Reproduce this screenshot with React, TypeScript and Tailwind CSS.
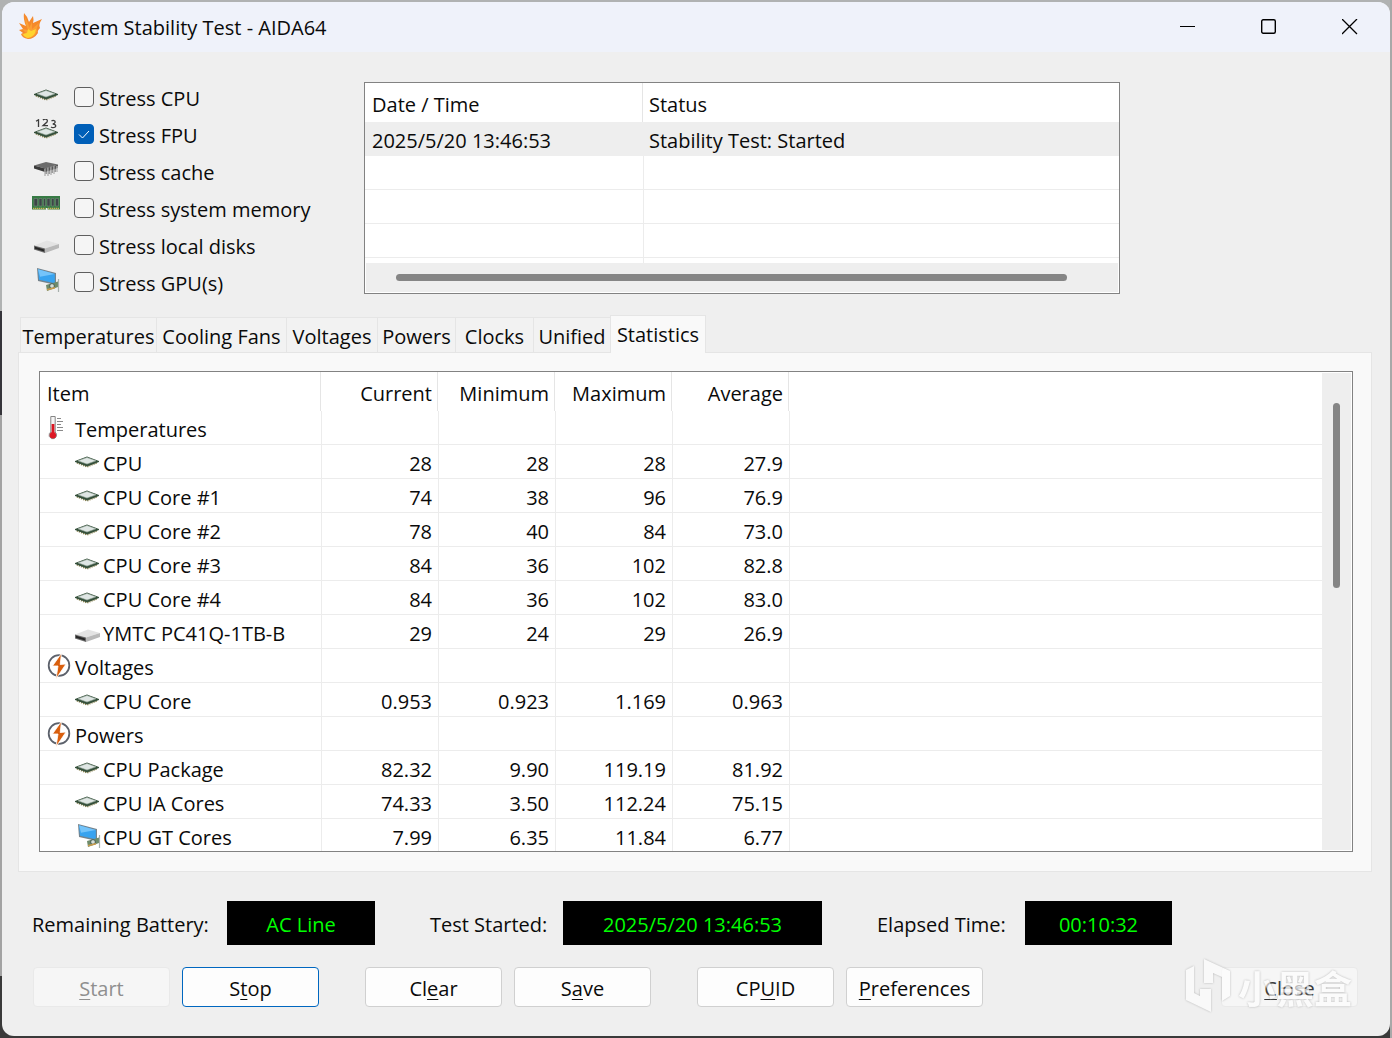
import { clsx } from "clsx";
import { useState } from "react";
import type { ReactNode } from "react";

type IconName = "cpu" | "fpu" | "cache" | "memory" | "disk" | "gpu" | "thermometer" | "bolt";

interface StressOption {
  id: string;
  label: string;
  icon: IconName;
}

interface StatRow {
  label: string;
  icon: IconName;
  group?: boolean;
  values?: string[];
}

const STRESS_OPTIONS: StressOption[] = [
  { id: "cpu", label: "Stress CPU", icon: "cpu" },
  { id: "fpu", label: "Stress FPU", icon: "fpu" },
  { id: "cache", label: "Stress cache", icon: "cache" },
  { id: "memory", label: "Stress system memory", icon: "memory" },
  { id: "disk", label: "Stress local disks", icon: "disk" },
  { id: "gpu", label: "Stress GPU(s)", icon: "gpu" },
];

const TABS = [
  { label: "Temperatures", width: "w-[136px]" },
  { label: "Cooling Fans", width: "w-[130px]" },
  { label: "Voltages", width: "w-[91px]" },
  { label: "Powers", width: "w-[78px]" },
  { label: "Clocks", width: "w-[78px]" },
  { label: "Unified", width: "w-[77px]" },
  { label: "Statistics", width: "w-[96px]" },
];

const COLUMNS = ["Current", "Minimum", "Maximum", "Average"];

const ROWS: StatRow[] = [
  { label: "Temperatures", icon: "thermometer", group: true },
  { label: "CPU", icon: "cpu", values: ["28", "28", "28", "27.9"] },
  { label: "CPU Core #1", icon: "cpu", values: ["74", "38", "96", "76.9"] },
  { label: "CPU Core #2", icon: "cpu", values: ["78", "40", "84", "73.0"] },
  { label: "CPU Core #3", icon: "cpu", values: ["84", "36", "102", "82.8"] },
  { label: "CPU Core #4", icon: "cpu", values: ["84", "36", "102", "83.0"] },
  { label: "YMTC PC41Q-1TB-B", icon: "disk", values: ["29", "24", "29", "26.9"] },
  { label: "Voltages", icon: "bolt", group: true },
  { label: "CPU Core", icon: "cpu", values: ["0.953", "0.923", "1.169", "0.963"] },
  { label: "Powers", icon: "bolt", group: true },
  { label: "CPU Package", icon: "cpu", values: ["82.32", "9.90", "119.19", "81.92"] },
  { label: "CPU IA Cores", icon: "cpu", values: ["74.33", "3.50", "112.24", "75.15"] },
  { label: "CPU GT Cores", icon: "gpu", values: ["7.99", "6.35", "11.84", "6.77"] },
];

function Chip({ y = 0 }: { y?: number }) {
  return (
    <g transform={`translate(0 ${y})`}>
      <path d="M4 13.5 14 17.5 24 13.5" fill="none" stroke="#8d8450" strokeWidth="2.2" strokeDasharray="1.2 1" />
      <path d="M2 12 14 7.5 26 12V13L14 17.5 2 13z" fill="#35503b" />
      <path d="M5 11.8 14 8.5 23 11.8 14 15z" fill="#dfe6e4" stroke="#9aaba0" strokeWidth="0.6" />
    </g>
  );
}

/** 28px device icons, shared by the option list and the statistics tree. */
function Icon({ name }: { name: IconName }) {
  return (
    <svg className="size-7 shrink-0" viewBox="0 0 28 28" aria-hidden="true">
      {name === "cpu" && <Chip />}
      {name === "fpu" && (
        <>
          <g fill="none" stroke="#3c3c3c" strokeWidth="1.3">
            <path d="M4 2.2 6.5 .8V8" />
            <path d="M11 1.2Q12 -.2 14 .2 16 1 15 3L11 6.7H16" />
            <path d="M19.5 2Q21 .8 22.8 2 24 4 20.8 5 24.5 5.5 23.5 7.7 21 9.5 19 8" />
          </g>
          <Chip y={1} />
        </>
      )}
      {name === "cache" && (
        <>
          <path d="M2 9.5 14 6 26 8.5 13 12.5z" fill="#6c6c6c" />
          <path d="M2 9.5 13 12.5V16L2 12.5z" fill="#3a3a3a" />
          <path d="M13 12.5 26 8.5V12L13 16z" fill="#575757" />
          <path d="M13 13V20M16 12V20M19 11V19M22 10V18M25 10V16" stroke="#b4b4b4" strokeWidth="1.4" />
          <path d="M14.2 13V18M17.2 12V18M20.2 11V17M23.2 10V16" stroke="#555" strokeWidth="0.8" />
        </>
      )}
      {name === "memory" && (
        <>
          <path d="M0 3H28V16.5H15.5V15H14V16.5H0z" fill="#377b45" />
          <path d="M2 5.5H5.5V13H2zM7 5.5H10V13H7zM11.5 5.5H13.5V13H11.5zM15 5.5H18V13H15zM19.5 5.5H22V13H19.5zM23.5 5.5H26.5V13H23.5z" fill="#3c4647" stroke="#7d8f80" strokeWidth="0.5" />
          <path d="M1 15.5H13.5M16 15.5H27" stroke="#c7b35a" strokeWidth="1.6" strokeDasharray="1.4 .6" />
        </>
      )}
      {name === "disk" && (
        <>
          <path d="M2 15.5 15 10.5 27 14 13 18.5z" fill="#e3e3e3" />
          <path d="M2 15.5 13 18.5V23L2 19.5z" fill="#686868" />
          <path d="M3 16.8 12 19.4V21.6L3 18.8z" fill="#262626" />
          <path d="M13 18.5 27 14V18L13 23z" fill="#b9b9b9" />
        </>
      )}
      {name === "gpu" && (
        <>
          <path d="M5 1 24 6 24 18 6 14z" fill="#75838c" />
          <path d="M6 2.3 22.8 6.9 22.8 16.2 7 12.7z" fill="#38a3ef" />
          <path d="M6 2.3 22.8 6.9 8 9.8z" fill="#74c4fa" />
          <path d="M14 18 26 14.5V20L15 24z" fill="#6e8b6b" />
          <circle cx="20" cy="19" r="2.4" fill="#d3ddd7" stroke="#475c50" />
          <path d="M26.5 12V25" stroke="#a7b0ac" strokeWidth="1.2" />
          <path d="M15 22.8 23 20.7" stroke="#c99b4a" strokeWidth="1.5" />
        </>
      )}
      {name === "thermometer" && (
        <>
          <path d="M3.8 1.5H8.2V17Q10.4 19 9.2 21.8 7.4 24.5 4.4 23.6 1 21.5 2.4 18.5L3.8 17z" fill="#f5f5f5" stroke="#858585" />
          <path d="M4.6 9H7.4V18H4.6z" fill="#dc1724" />
          <circle cx="5.9" cy="20.2" r="3.2" fill="#dc1724" />
          <path d="M10 3.5H14M10 6.5H16M10 9.5H14M10 12.5H16M10 15.5H16" stroke="#8a8a8a" />
        </>
      )}
      {name === "bolt" && (
        <>
          <circle cx="12" cy="12.5" r="10.3" fill="#fff" stroke="#5c616b" strokeWidth="1.8" />
          <path d="M14.5 .2 5.5 13 11 13 9 25.8 19 11 13.2 11.5z" fill="#d95f0e" stroke="#fff" strokeWidth="0.8" />
        </>
      )}
    </svg>
  );
}

function FlameIcon() {
  return (
    <svg className="h-7 w-6 shrink-0" viewBox="0 0 24 28" aria-hidden="true">
      <path d="M6 0Q10 4 11 9L15 3Q16 7 15 10L24 6Q20 12 22 15 19 18 20 20 16 26 10 26 4 25 3 21L5 20 1 17 5 16 1 10 8 13Q5 6 6 0z" fill="#f58a2c" />
      <path d="M7 4Q11 11 11 15L14 9V16L21 10Q18 16 19 18 17 25 10 25 5 24 4 21L8 20 4 16 10 17Q7 11 7 4z" fill="#fb9f34" />
      <path d="M10 16 13 18 18 16Q17 24 10 25 6 24 5 21L9 20z" fill="#ffd42e" />
    </svg>
  );
}

function TitleBar() {
  return (
    <header className="flex h-[50px] items-center bg-[#eff2fa] pl-4">
      <FlameIcon />
      <h1 className="ml-2 flex-1 truncate pt-[2px] pl-px">System Stability Test - AIDA64</h1>
      <div className="flex">
        <button type="button" aria-label="Minimize" className="grid h-12 w-[81px] place-items-center">
          <svg className="size-4" viewBox="0 0 16 16" stroke="#000">
            <path d="M0 7.5H15" />
          </svg>
        </button>
        <button type="button" aria-label="Maximize" className="grid h-12 w-[81px] place-items-center">
          <svg className="size-4" viewBox="0 0 16 16" fill="none" stroke="#000" strokeWidth="1.4">
            <rect x=".7" y=".7" width="13.6" height="13.6" rx="1.5" />
          </svg>
        </button>
        <button type="button" aria-label="Close window" className="grid h-12 w-[81px] place-items-center">
          <svg className="size-4" viewBox="0 0 16 16" stroke="#000" strokeWidth="1.3">
            <path d="M0 0 15 15M15 0 0 15" />
          </svg>
        </button>
      </div>
    </header>
  );
}

function StressOptions() {
  const [checked, setChecked] = useState<string[]>(["fpu"]);

  const toggle = (id: string) =>
    setChecked((prev) => (prev.includes(id) ? prev.filter((x) => x !== id) : [...prev, id]));

  return (
    <ul className="w-[332px] shrink-0">
      {STRESS_OPTIONS.map(({ id, label, icon }) => (
        <li key={id} className="flex h-[37px] items-start">
          <Icon name={icon} />
          <label className="ml-[14px] flex h-[30px] items-center gap-[5px]">
            <span className="grid">
              <input
                type="checkbox"
                checked={checked.includes(id)}
                onChange={() => toggle(id)}
                className="col-start-1 row-start-1 size-5 appearance-none rounded-[4px] border border-[#5f5f5f] bg-[#f5f5f5] checked:border-[#005fb8] checked:bg-[#005fb8]"
              />
              {checked.includes(id) && (
                <svg
                  className="pointer-events-none col-start-1 row-start-1 size-5"
                  viewBox="0 0 20 20"
                  fill="none"
                  stroke="#fff"
                >
                  <path d="M5 10.5 8.5 14 15 7" />
                </svg>
              )}
            </span>
            <span className="pt-[3px]">{label}</span>
          </label>
        </li>
      ))}
    </ul>
  );
}

function EventLog() {
  return (
    <div className="mr-[254px] flex h-[212px] min-w-0 flex-1 flex-col border border-[#828282] bg-white">
      <div className="min-h-0 flex-1 overflow-hidden">
        <table className="w-full table-fixed border-separate border-spacing-0 text-left">
          <thead>
            <tr className="h-[39px]">
              <th className="w-[278px] border-r border-[#e5e5e5] p-0 pt-1 pl-[7px] font-normal">Date / Time</th>
              <th className="p-0 pt-1 pl-[6px] font-normal">Status</th>
            </tr>
          </thead>
          <tbody>
            <tr className="h-[34px] bg-[#eeeeee]">
              <td className="p-0 pt-[3px] pl-[7px]">2025/5/20 13:46:53</td>
              <td className="p-0 pt-[3px] pl-[6px]">Stability Test: Started</td>
            </tr>
            {[0, 1, 2, 3].map((n) => (
              <tr key={n} className="h-[34px]">
                <td className="border-b border-[#ececec] p-0" />
                <td className="border-b border-l border-[#ececec] p-0" />
              </tr>
            ))}
          </tbody>
        </table>
      </div>
      <div className="mx-px mb-px flex h-[29px] items-center bg-[#eeeeee] pr-[51px] pl-[30px]">
        <div className="h-[7px] flex-1 rounded-full bg-[#858585]" />
      </div>
    </div>
  );
}

function TabStrip() {
  const [active, setActive] = useState("Statistics");

  return (
    <div role="tablist" className="flex h-[38px] items-end pl-[2px]">
      {TABS.map(({ label, width }) => (
        <button
          key={label}
          type="button"
          role="tab"
          aria-selected={active === label}
          onClick={() => setActive(label)}
          className={clsx(
            "shrink-0 border-t border-l border-[#e5e5e5] whitespace-nowrap",
            width,
            active === label ? "z-10 -mb-px h-[38px] border-r bg-[#f9f9f9] pt-px" : "h-[35px] bg-[#f2f2f2] pt-[3px]",
          )}
        >
          {label}
        </button>
      ))}
    </div>
  );
}

function StatisticsTable() {
  return (
    <div className="flex h-[481px] border border-[#828282] bg-white">
      <div className="min-w-0 flex-1 overflow-hidden">
        <table className="w-full table-fixed border-separate border-spacing-0 text-right">
          <thead>
            <tr className="h-[39px]">
              <th className="w-[281px] border-r border-[#e5e5e5] p-0 pt-1 pl-[7px] text-left font-normal">Item</th>
              {COLUMNS.map((name) => (
                <th key={name} className="w-[117px] border-r border-[#e5e5e5] p-0 pt-1 pr-[5px] font-normal">
                  {name}
                </th>
              ))}
              <th className="p-0" />
            </tr>
          </thead>
          <tbody>
            {ROWS.map(({ label, icon, group, values }, i) => (
              <tr key={i}>
                <td className="border-b border-[#ececec] p-0">
                  <div className={clsx("flex h-[33px] items-center pt-[2px]", group ? "pl-[7px]" : "pl-[33px]")}>
                    <Icon name={icon} />
                    <span className={clsx("pt-[3px] whitespace-nowrap", !group && "pl-[2px]")}>{label}</span>
                  </div>
                </td>
                {COLUMNS.map((name, c) => (
                  <td key={name} className="border-b border-l border-[#ececec] p-0 pt-[5px] pr-[6px]">
                    {values?.[c]}
                  </td>
                ))}
                <td className="border-b border-l border-[#ececec] p-0" />
              </tr>
            ))}
          </tbody>
        </table>
      </div>
      <div className="my-px mr-px flex w-[29px] justify-center bg-[#eeeeee] pt-[30px]">
        <div className="h-[185px] w-[7px] rounded-full bg-[#858585]" />
      </div>
    </div>
  );
}

function Readout({ label, value, labelWidth, width }: { label: string; value: string; labelWidth: string; width: string }) {
  return (
    <div className="flex items-center">
      <span className={clsx("pt-[3px] whitespace-nowrap", labelWidth)}>{label}</span>
      <output aria-label={label} className={clsx("h-11 bg-black pt-[2px] text-center leading-[44px] text-[#00ff00]", width)}>
        {value}
      </output>
    </div>
  );
}

function PushButton({ children, primary, disabled }: { children: ReactNode; primary?: boolean; disabled?: boolean }) {
  return (
    <button
      type="button"
      disabled={disabled}
      className={clsx(
        "h-10 w-[137px] rounded-[4px] border pt-[3px] disabled:border-[#e9e9e9] disabled:bg-[#f6f6f6] disabled:text-[#8f8f8f]",
        primary ? "border-[#0067c0] bg-[#fdfdfd]" : "border-[#d0d0d0] bg-[#fdfdfd]",
      )}
    >
      {children}
    </button>
  );
}

function Key({ children }: { children: ReactNode }) {
  return <u className="decoration-1 underline-offset-[3px]">{children}</u>;
}

function Watermark() {
  return (
    <div className="pointer-events-none absolute -top-2 right-[22px] flex items-center gap-[6px] text-white opacity-65 drop-shadow-[0_0_1px_#999999]">
      <svg className="h-14 w-12" viewBox="0 0 48 56" fill="currentColor" aria-hidden="true">
        <path d="M2 11 10 7V34L16 37V30H27V53L2 41z" />
        <path d="M20 0 46 12V37L38 42V18L29 14V24H20z" />
      </svg>
      <span className="font-['Noto_Sans_CJK_SC',sans-serif] text-[38px] leading-[52px] font-bold">小黑盒</span>
    </div>
  );
}

export default function App() {
  return (
    <div className="min-h-screen border-r-2 border-[#a8a8a8] bg-[linear-gradient(#b0b2b2_0,#b0b2b2_30%,#35343a_30%,#35343a_40%,#a3a3a3_40%,#a3a3a3_94%,#3a3a3a_94%)] py-[2px] pl-[2px] font-['Open_Sans','Noto_Sans',sans-serif] text-[20px] leading-7 text-[#0a0a0a]">
      <div className="min-h-[1034px] overflow-hidden rounded-[12px] bg-[#efefef]">
        <TitleBar />
        <main className="px-4 pt-[30px]">
          <div className="flex pl-[14px]">
            <StressOptions />
            <EventLog />
          </div>
          <section className="mr-[2px] pt-[10px]">
            <TabStrip />
            <div className="border border-[#e5e5e5] bg-[#f9f9f9] pt-[18px] pr-[18px] pb-[19px] pl-5">
              <StatisticsTable />
            </div>
          </section>
          <footer className="pt-[29px] pb-7 pl-[14px]">
            <div className="flex gap-[55px]">
              <Readout label="Remaining Battery:" value="AC Line" labelWidth="w-[195px]" width="w-[148px]" />
              <Readout label="Test Started:" value="2025/5/20 13:46:53" labelWidth="w-[133px]" width="w-[259px]" />
              <Readout label="Elapsed Time:" value="00:10:32" labelWidth="w-[148px]" width="w-[147px]" />
            </div>
            <div className="relative mt-[22px] flex gap-[46px] pr-4 pl-px">
              <div className="flex gap-3">
                <PushButton disabled><Key>S</Key>tart</PushButton>
                <PushButton primary>S<Key>t</Key>op</PushButton>
              </div>
              <div className="flex gap-3">
                <PushButton>Cl<Key>e</Key>ar</PushButton>
                <PushButton>S<Key>a</Key>ve</PushButton>
              </div>
              <div className="flex gap-3">
                <PushButton>CP<Key>U</Key>ID</PushButton>
                <PushButton><Key>P</Key>references</PushButton>
              </div>
              <div className="ml-auto flex">
                <PushButton disabled><span className="text-[#3a3a3a]"><Key>C</Key>lose</span></PushButton>
              </div>
              <Watermark />
            </div>
          </footer>
        </main>
      </div>
    </div>
  );
}
